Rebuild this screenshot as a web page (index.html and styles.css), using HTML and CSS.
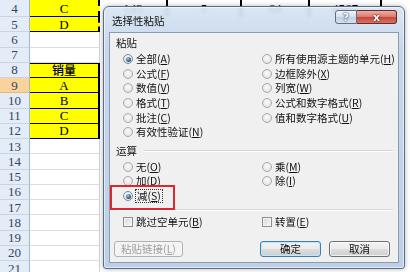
FILE: index.html
```html
<!DOCTYPE html>
<html lang="zh-CN">
<head>
<meta charset="UTF-8">
<meta name="viewport" content="width=device-width, initial-scale=1.0">
<title>选择性粘贴</title>
<link rel="stylesheet" href="styles.css">
</head>
<body>
<div class="sheet">
    <div class="row first">
        <div class="rh">4</div>
        <div class="cell yel ants">C</div>
        <div class="cell num c1">143</div>
        <div class="cell num c2">5</div>
        <div class="cell num c3">64</div>
        <div class="cell num c4 ants">4567</div>
        <div class="fill"></div>
    </div>
    <div class="row"><div class="rh">5</div><div class="cell yel ants">D</div><div class="fill"></div></div>
    <div class="row"><div class="rh">6</div><div class="cell"></div><div class="fill"></div></div>
    <div class="row"><div class="rh">7</div><div class="cell"></div><div class="fill"></div></div>
    <div class="row"><div class="rh">8</div><div class="cell yel edge cjk">销量</div><div class="fill"></div></div>
    <div class="row"><div class="rh sel">9</div><div class="cell yel">A</div><div class="fill"></div></div>
    <div class="row"><div class="rh">10</div><div class="cell yel">B</div><div class="fill"></div></div>
    <div class="row"><div class="rh">11</div><div class="cell yel">C</div><div class="fill"></div></div>
    <div class="row"><div class="rh">12</div><div class="cell yel">D</div><div class="fill"></div></div>
    <div class="row"><div class="rh">13</div><div class="cell"></div><div class="fill"></div></div>
    <div class="row"><div class="rh">14</div><div class="cell"></div><div class="fill"></div></div>
    <div class="row"><div class="rh">15</div><div class="cell"></div><div class="fill"></div></div>
    <div class="row"><div class="rh">16</div><div class="cell"></div><div class="fill"></div></div>
    <div class="row"><div class="rh">17</div><div class="cell"></div><div class="fill"></div></div>
    <div class="row"><div class="rh">18</div><div class="cell"></div><div class="fill"></div></div>
    <div class="row"><div class="rh">19</div><div class="cell"></div><div class="fill"></div></div>
    <div class="row"><div class="rh">20</div><div class="cell"></div><div class="fill"></div></div>
    <div class="row"><div class="rh">21</div><div class="cell"></div><div class="fill"></div></div>
</div>

<div class="dialog">
    <div class="titlebar">
        <span class="title">选择性粘贴</span>
        <div class="caps">
            <span class="cap help">?</span>
            <span class="cap close">x</span>
        </div>
    </div>
    <div class="client">
        <div class="group">粘贴</div>
        <div class="opts">
            <div class="opt"><i class="radio on"></i>全部(<u>A</u>)</div>
            <div class="opt"><i class="radio"></i>所有使用源主题的单元(<u>H</u>)</div>
            <div class="opt"><i class="radio"></i>公式(<u>F</u>)</div>
            <div class="opt"><i class="radio"></i>边框除外(<u>X</u>)</div>
            <div class="opt"><i class="radio"></i>数值(<u>V</u>)</div>
            <div class="opt"><i class="radio"></i>列宽(<u>W</u>)</div>
            <div class="opt"><i class="radio"></i>格式(<u>T</u>)</div>
            <div class="opt"><i class="radio"></i>公式和数字格式(<u>R</u>)</div>
            <div class="opt"><i class="radio"></i>批注(<u>C</u>)</div>
            <div class="opt"><i class="radio"></i>值和数字格式(<u>U</u>)</div>
            <div class="opt"><i class="radio"></i>有效性验证(<u>N</u>)</div>
        </div>
        <div class="group line">运算</div>
        <div class="opts ops">
            <div class="opt"><i class="radio"></i>无(<u>O</u>)</div>
            <div class="opt"><i class="radio"></i>乘(<u>M</u>)</div>
            <div class="opt"><i class="radio"></i>加(<u>D</u>)</div>
            <div class="opt"><i class="radio"></i>除(<u>I</u>)</div>
            <div class="opt mark"><i class="radio on"></i><span class="focus">减(<u>S</u>)</span></div>
        </div>
        <div class="sep"></div>
        <div class="opts checks">
            <div class="opt"><i class="check"></i>跳过空单元(<u>B</u>)</div>
            <div class="opt"><i class="check"></i>转置(<u>E</u>)</div>
        </div>
        <div class="buttons">
            <span class="btn off">粘贴链接(<u>L</u>)</span>
            <span class="btn ok">确定</span>
            <span class="btn">取消</span>
        </div>
    </div>
</div>
</body>
</html>
```

FILE: styles.css
```css
body {
    margin: 0;
    width: 410px;
    height: 272px;
    overflow: hidden;
    position: relative;
    background-color: #fff;
}

/* worksheet behind the dialog */
.sheet {
    font-family: "Liberation Serif", serif;
    font-size: 13px;
    line-height: 1;
    color: #000;
}
.row {
    display: flex;
    height: 15.25px;
}
.row.first {
    height: 17px;
}
.rh {
    width: 30px;
    box-sizing: border-box;
    background-color: #e4ecf7;
    border-right: 1px solid #9eb6ce;
    border-bottom: 1px solid #c9d5e4;
    color: #33465f;
    display: flex;
    align-items: center;
    justify-content: center;
}
.rh.sel {
    background-color: #f9d39b;
    border-bottom-color: #e8b86e;
}
.cell {
    width: 70px;
    box-sizing: border-box;
    border-right: 1px solid #d4d4d4;
    border-bottom: 1px solid #dcdcdc;
    display: flex;
    align-items: center;
    justify-content: center;
}
.cell.yel {
    background-color: #ffff00;
    border-bottom: 1px solid #000;
    border-right: 2px solid #000;
}
.cell.edge {
    border-top: 1px solid #000;
}
.cell.cjk {
    font-family: "Noto Sans CJK SC", sans-serif;
    font-size: 12px;
    font-weight: 500;
    line-height: 12px;
}
.cell.num {
    border-right: 2px solid #000;
    border-bottom: none;
}
.cell.ants {
    border-right-style: dashed;
}
.c1 { width: 68px; }
.c2 { width: 74px; }
.c3 { width: 68px; }
.c4 { width: 72px; }
.fill {
    flex: 1;
}

/* paste special dialog */
.dialog {
    position: absolute;
    left: 103px;
    top: 6px;
    width: 302px;
    height: 263px;
    box-sizing: border-box;
    border: 1px solid #5b6d86;
    border-radius: 6px 6px 3px 3px;
    background: linear-gradient(rgba(214, 227, 242, 0.88), rgba(195, 212, 234, 0.92) 40px, #bdd0e8);
    backdrop-filter: blur(2px);
    box-shadow: inset 0 0 0 1px rgba(255, 255, 255, 0.55), 0 0 5px rgba(0, 0, 0, 0.3);
    display: flex;
    flex-direction: column;
    font-family: "Noto Sans CJK SC", sans-serif;
    font-size: 10.5px;
    color: #111;
}
.titlebar {
    height: 25px;
    display: flex;
    align-items: flex-start;
}
.title {
    margin: 7px 0 0 8px;
    line-height: 14px;
}
.caps {
    display: flex;
    margin: 3px 7px 0 auto;
}
.cap {
    height: 14px;
    box-sizing: border-box;
    border: 1px solid #5f6e84;
    display: flex;
    align-items: center;
    justify-content: center;
    font-family: "DejaVu Sans", sans-serif;
    font-weight: bold;
    font-size: 11px;
    line-height: 1;
    color: #fff;
}
.help {
    width: 22px;
    border-radius: 3px 0 0 3px;
    background: linear-gradient(#eef3f9, #d5e0ed 50%, #c0cfe3 51%, #d6e1ee);
    text-shadow: 0 0 2px #2c3d55, 0 0 1px #2c3d55;
}
.close {
    width: 40px;
    border-left: none;
    border-radius: 0 3px 3px 0;
    border-color: #6b2a25;
    background: linear-gradient(#eab0a6, #d87a6d 50%, #c5463a 51%, #d77462);
    text-shadow: 0 0 2px #4d120d, 0 0 1px #4d120d;
}
.client {
    flex: 1;
    margin: 0 5px 5px;
    box-sizing: border-box;
    border: 1px solid #8a9cb4;
    background-color: #f0f0f0;
    padding: 3px 5px 0 6px;
    display: flex;
    flex-direction: column;
}
.group {
    line-height: 14px;
}
.group.line {
    margin-top: 4px;
    display: flex;
    align-items: center;
}
.group.line::after {
    content: "";
    flex: 1;
    margin-left: 7px;
    border-top: 1px solid #d5d5d5;
    border-bottom: 1px solid #fff;
}
.opts {
    display: grid;
    grid-template-columns: 139px 1fr;
    grid-auto-rows: 14.6px;
    margin: 2px 0 0 7px;
}
.opt {
    display: flex;
    align-items: center;
    white-space: nowrap;
    line-height: 14px;
}
.radio {
    width: 10px;
    height: 10px;
    box-sizing: border-box;
    margin-right: 3px;
    border: 1px solid #a9a9a9;
    border-radius: 50%;
    background: radial-gradient(circle at 50% 40%, #fbfbfb, #dcdcdc);
    display: flex;
    align-items: center;
    justify-content: center;
}
.radio.on {
    border-color: #7f8b99;
}
.radio.on::after {
    content: "";
    width: 5px;
    height: 5px;
    border-radius: 50%;
    background: radial-gradient(circle at 40% 35%, #8fd0f5, #1b4f7a 70%);
}
.check {
    width: 10px;
    height: 10px;
    box-sizing: border-box;
    margin-right: 3px;
    border: 1px solid #8e8f8f;
    background: linear-gradient(135deg, #d6d6d6, #fafafa);
    box-shadow: inset 0 0 0 1px #f2f2f2;
}
.opt.mark {
    position: relative;
    justify-self: start;
}
.opt.mark::after {
    content: "";
    position: absolute;
    left: -13px;
    right: -13px;
    top: -4px;
    bottom: -7px;
    border: 2px solid #e2242b;
}
.focus {
    outline: 1px dotted #333;
    padding: 0 1px;
    line-height: 12px;
}
.sep {
    margin-top: 6px;
    border-top: 1px solid #d5d5d5;
    border-bottom: 1px solid #fff;
}
.checks {
    margin-top: 4px;
    grid-auto-rows: 14px;
}
.buttons {
    display: flex;
    gap: 8px;
    margin: 12px 3px 0 -2px;
}
.btn {
    width: 61px;
    height: 16px;
    box-sizing: border-box;
    border: 1px solid #707070;
    border-radius: 3px;
    background: linear-gradient(#f3f3f3, #ebebeb 50%, #dddddd 51%, #cfcfcf);
    box-shadow: inset 0 0 0 1px rgba(255, 255, 255, 0.7);
    display: flex;
    align-items: center;
    justify-content: center;
    line-height: 14px;
}
.btn.off {
    width: 69px;
    margin-right: auto;
    border-color: #adb2b5;
    background: #f4f4f4;
    box-shadow: none;
    color: #a0a0a0;
}
.btn.ok {
    border-color: #3c7fb1;
    box-shadow: inset 0 0 0 1px #bfe6fb;
}
```
